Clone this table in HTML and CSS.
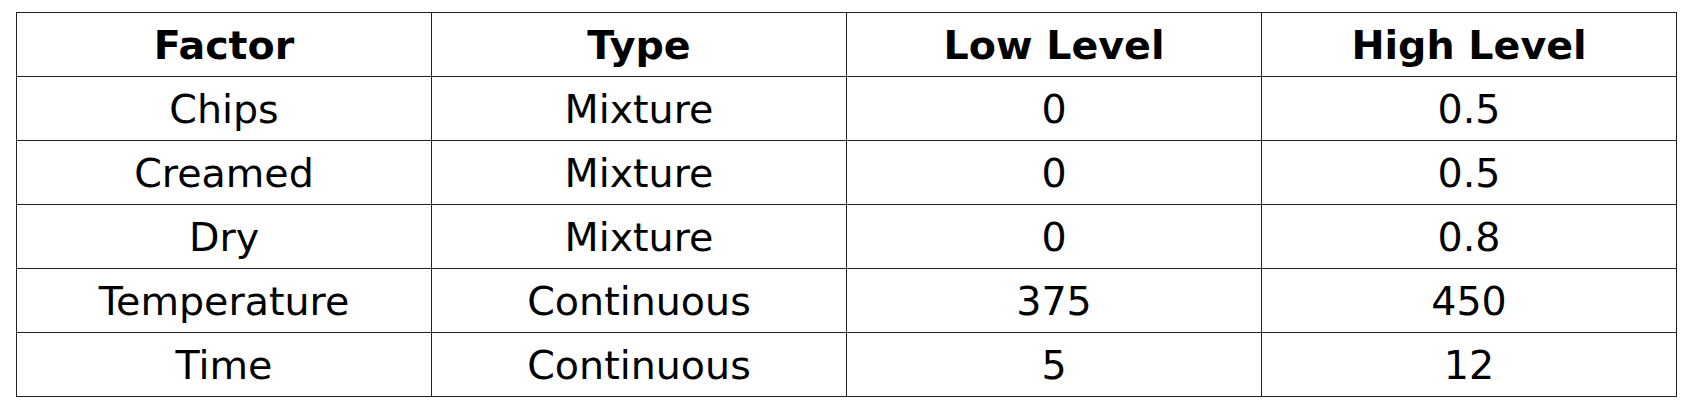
FILE: index.html
```html
<!DOCTYPE html>
<html>
<head>
<meta charset="utf-8">
<link rel="stylesheet" href="styles.css">
</head>
<body>
<table class="factors">
  <thead>
    <tr><th>Factor</th><th>Type</th><th>Low Level</th><th>High Level</th></tr>
  </thead>
  <tbody>
    <tr><td>Chips</td><td>Mixture</td><td>0</td><td>0.5</td></tr>
    <tr><td>Creamed</td><td>Mixture</td><td>0</td><td>0.5</td></tr>
    <tr><td>Dry</td><td>Mixture</td><td>0</td><td>0.8</td></tr>
    <tr><td>Temperature</td><td>Continuous</td><td>375</td><td>450</td></tr>
    <tr><td>Time</td><td>Continuous</td><td>5</td><td>12</td></tr>
  </tbody>
</table>
</body>
</html>
```
FILE: styles.css
```css
html, body {
  margin: 0;
  padding: 0;
  background: #ffffff;
}
body {
  padding: 12px 16px;
  font-family: "DejaVu Sans", sans-serif;
  color: #000;
}
.factors {
  border-collapse: collapse;
  width: 1661px;
  table-layout: fixed;
}
.factors th,
.factors td {
  border: 1px solid #222;
  height: 60px;
  padding: 3px 0 0;
  text-align: center;
  vertical-align: middle;
  font-size: 39.6px;
  line-height: 1;
}
.factors th {
  font-weight: bold;
}
.factors td {
  font-weight: normal;
}
```
